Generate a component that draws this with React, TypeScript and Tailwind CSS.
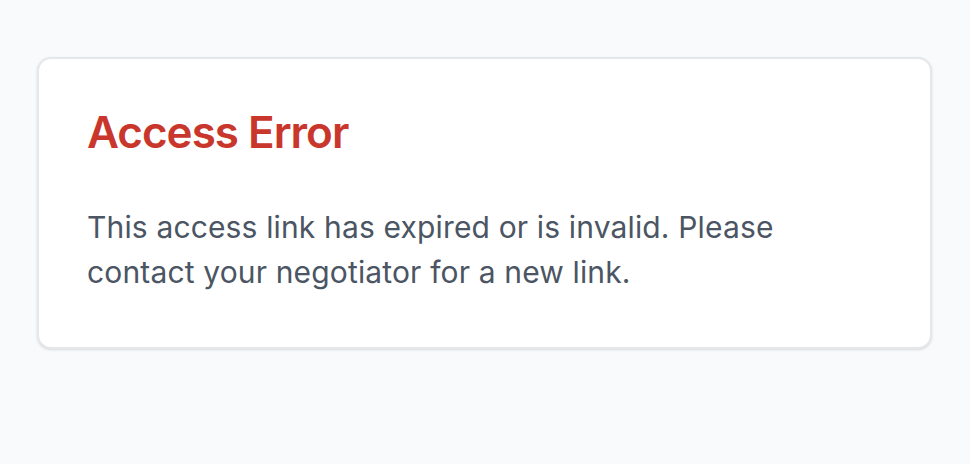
export default function App() {
  return (
    <div
      className="min-h-screen bg-[#f9fafb] px-[37px] pt-[57px]"
      style={{ fontFamily: 'Inter, "Noto Sans", sans-serif' }}
    >
      <div className="w-[895px] rounded-[14px] border-2 border-[#e5e7eb] bg-white px-[48px] pt-[47px] pb-[52px] shadow-sm">
        <h1 className="text-[44px] leading-[1.2] font-semibold tracking-[-1px] text-[#c9372c]">
          Access Error
        </h1>
        <p className="mt-[46px] text-[30px] leading-[45px] tracking-[0.15px] text-[#4b5563]">
          This access link has expired or is invalid. Please
          <br />
          contact your negotiator for a new link.
        </p>
      </div>
    </div>
  )
}
